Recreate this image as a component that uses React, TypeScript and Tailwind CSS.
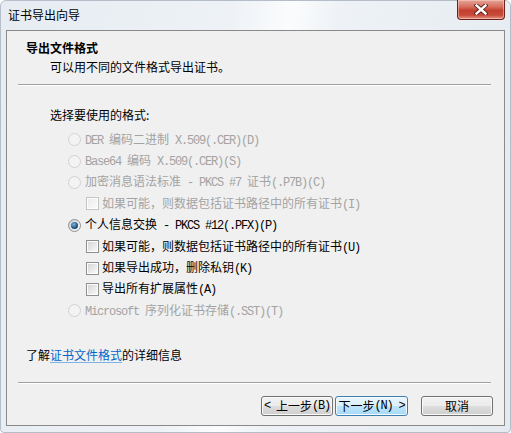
import React from "react";

// 证书导出向导 - Win7 风格对话框
const CJK = "font-['Noto_Sans_CJK_SC',sans-serif]";

function Mixed({ text }: { text: string }) {
  const parts = text.split(/([\x20-\x7e]+)/).filter(Boolean);
  return (
    <>
      {parts.map((p, i) =>
        /^[\x20-\x7e]+$/.test(p) ? (
          <span key={i} className="font-['Liberation_Mono',monospace] text-[12px] tracking-[-1.2px] whitespace-pre">
            {p}
          </span>
        ) : (
          <span key={i}>{p}</span>
        )
      )}
    </>
  );
}

function Radio({ checked, disabled }: { checked?: boolean; disabled?: boolean }) {
  return (
    <span
      className={`w-[13px] h-[13px] rounded-full border flex items-center justify-center shrink-0 ${
        disabled
          ? "border-[#d2d2d2] bg-[#f3f3f3]"
          : "border-[#8e8f8f] bg-[linear-gradient(135deg,#cfcfcf,#fbfbfb)]"
      }`}
    >
      {checked && (
        <span className="w-[7px] h-[7px] rounded-full bg-[radial-gradient(circle_at_40%_35%,#7fb6e2,#1b4f80_60%,#0f2f52)]" />
      )}
    </span>
  );
}

function Check({ disabled }: { disabled?: boolean }) {
  return (
    <span
      className={`w-[13px] h-[13px] border flex items-center justify-center shrink-0 bg-[#fdfdfd] ${
        disabled ? "border-[#c4c4c4]" : "border-[#8e8f8f]"
      }`}
    >
      <span
        className={`w-[9px] h-[9px] ${
          disabled
            ? "bg-[linear-gradient(135deg,#ececec,#fafafa)]"
            : "bg-[linear-gradient(135deg,#d6d6d6,#f9f9f9)]"
        }`}
      />
    </span>
  );
}

type Row = { kind: "radio" | "check"; text: string; disabled?: boolean; checked?: boolean };

const rows: Row[] = [
  { kind: "radio", text: "DER 编码二进制 X.509(.CER)(D)", disabled: true },
  { kind: "radio", text: "Base64 编码 X.509(.CER)(S)", disabled: true },
  { kind: "radio", text: "加密消息语法标准 - PKCS #7 证书(.P7B)(C)", disabled: true },
  { kind: "check", text: "如果可能，则数据包括证书路径中的所有证书(I)", disabled: true },
  { kind: "radio", text: "个人信息交换 - PKCS #12(.PFX)(P)", checked: true },
  { kind: "check", text: "如果可能，则数据包括证书路径中的所有证书(U)" },
  { kind: "check", text: "如果导出成功，删除私钥(K)" },
  { kind: "check", text: "导出所有扩展属性(A)" },
  { kind: "radio", text: "Microsoft 序列化证书存储(.SST)(T)", disabled: true },
];

function WinButton({ label, primary, w }: { label: string; primary?: boolean; w: string }) {
  return (
    <button
      className={`${w} h-[20px] rounded-[3px] border flex items-center justify-center text-[12px] leading-none text-black ${
        primary
          ? "border-[#3c7fb1] bg-[linear-gradient(#eaf6fd_0%,#d9f0fc_50%,#bee6fd_50%,#a7d9f5_100%)] shadow-[inset_0_0_0_1px_#f4fbff]"
          : "border-[#707070] bg-[linear-gradient(#f2f2f2_0%,#ebebeb_50%,#dddddd_50%,#cfcfcf_100%)] shadow-[inset_0_0_0_1px_#fbfbfb]"
      }`}
    >
      <Mixed text={label} />
    </button>
  );
}

function Separator() {
  return (
    <div className="ml-[11px] mr-[13px] flex flex-col">
      <div className="h-px bg-[#a0a0a0]" />
      <div className="h-px bg-white" />
    </div>
  );
}

export default function App() {
  return (
    <div className={`w-[511px] h-[433px] ${CJK} text-[12px] text-black select-none`}>
      <div className="w-full h-full rounded-t-[6px] rounded-b-[4px] border border-[#b5bec8] bg-[linear-gradient(100deg,#e6ecf2_0%,#eef2f6_40%,#fbfcfd_50%,#eef2f6_58%,#e4eaf0_100%)] flex flex-col">
        {/* --- TITLE BAR --- */}
        <div className="h-[29px] flex justify-between items-start shrink-0">
          <span className="pl-[7px] pt-[6px] leading-[16px] text-[12px] text-black">证书导出向导</span>
          <div className="mr-[5px] -mt-px w-[48px] h-[20px] rounded-b-[4px] border border-[#6b231b] border-t-0 bg-[linear-gradient(#e6a497_0%,#d67061_35%,#c2402f_55%,#c94a39_80%,#e49a8c_100%)] shadow-[inset_0_0_0_1px_rgba(255,220,210,0.45)] flex items-center justify-center">
            <svg width="14" height="11" viewBox="0 0 14 11">
              <path d="M2.5 1.5 L11.5 9.5 M11.5 1.5 L2.5 9.5" stroke="#5a1a14" strokeWidth="4.2" strokeLinecap="square" />
              <path d="M2.5 1.5 L11.5 9.5 M11.5 1.5 L2.5 9.5" stroke="#ffffff" strokeWidth="2.4" strokeLinecap="square" />
            </svg>
          </div>
        </div>

        {/* --- CLIENT AREA --- */}
        <div className="mx-[5px] h-[396px] border border-[#8a8a8a] bg-[#f0f0f0] flex flex-col">
          <div className="pl-[19px] mt-[9px] leading-[16px] font-bold">导出文件格式</div>
          <div className="pl-[43px] mt-[3px] leading-[16px]">可以用不同的文件格式导出证书。</div>
          <div className="mt-[9px]">
            <Separator />
          </div>

          <div className="pl-[43px] mt-[21px] leading-[16px]">选择要使用的格式:</div>

          <div className="mt-[6px] flex flex-col">
            {rows.map((r, i) => (
              <div
                key={i}
                className={`h-[21.4px] flex items-center ${r.kind === "radio" ? "pl-[61px] gap-[4px]" : "pl-[79px] gap-[3px]"} ${
                  r.disabled ? "text-[#a3a3a3]" : "text-black"
                }`}
              >
                {r.kind === "radio" ? <Radio checked={r.checked} disabled={r.disabled} /> : <Check disabled={r.disabled} />}
                <span className="leading-[16px] whitespace-nowrap">
                  <Mixed text={r.text} />
                </span>
              </div>
            ))}
          </div>

          <div className="pl-[19px] mt-[25.4px] leading-[16px]">
            了解<span className="text-[#0066cc] underline decoration-[#7fb2e5] underline-offset-2">证书文件格式</span>的详细信息
          </div>

          <div className="mt-[19px]">
            <Separator />
          </div>

          <div className="mt-[12px] pr-[11px] flex justify-end">
            <WinButton label="< 上一步(B)" w="w-[72px]" />
            <div className="w-[2px]" />
            <WinButton label="下一步(N) >" w="w-[73px]" primary />
            <div className="w-[13px]" />
            <WinButton label="取消" w="w-[72px]" />
          </div>
        </div>
      </div>
    </div>
  );
}
